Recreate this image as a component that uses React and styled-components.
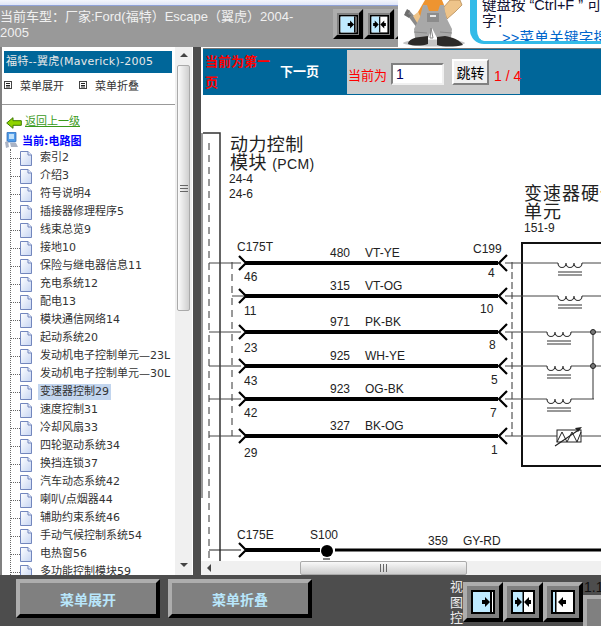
import React from 'react';
import styled, { createGlobalStyle } from 'styled-components';

const UI_FONT = '"DejaVu Sans", "Noto Sans CJK SC", sans-serif';
const ARIAL_FONT = '"Liberation Sans", "Noto Sans CJK SC", sans-serif';

const BLUE = '#006699';
const DARK = '#4d4d4d';
const GREY = '#999999';
const MID = '#808080';

const GlobalStyle = createGlobalStyle`
  html, body {
    margin: 0;
    padding: 0;
    background: ${DARK};
    overflow: hidden;
  }
`;

const Page = styled.div`
  width: 601px;
  height: 626px;
  display: grid;
  grid-template-rows: 47px 528px 51px;
  overflow: hidden;
  font-family: ${UI_FONT};
`;

/* ---- top ---- */

const Header = styled.header`
  display: flex;
  background: ${GREY};
  overflow: hidden;
`;

const HeaderLeft = styled.div`
  width: 398px;
  flex: none;
  overflow: hidden;
`;

const Strip = styled.div`
  height: 5px;
  background: linear-gradient(#f4f6fc, #dfe5f6);
  border-bottom: 1px solid #8fa2d8;
`;

const HeaderRow = styled.div`
  display: flex;
  padding-top: 3px;
`;

const CarTitle = styled.div`
  width: 333px;
  flex: none;
  padding-right: 12px;
  box-sizing: border-box;
  font: 13px/16px ${ARIAL_FONT};
  color: #f0f0f0;
`;

const HeaderButtons = styled.div`
  display: flex;
  gap: 1px;
`;

const ViewButton = styled.div`
  flex: none;
  box-sizing: border-box;
  width: ${(p) => p.$size}px;
  height: ${(p) => p.$size}px;
  display: flex;
  align-items: center;
  justify-content: center;
  background: ${MID};
  border-style: solid;
  border-width: 4px;
  border-color: #adadad #000 #000 #adadad;
`;

const Banner = styled.div`
  flex: 1;
  display: flex;
  background: #fff;
  overflow: hidden;
`;

const Speech = styled.div`
  flex: 1;
  height: 44px;
  margin-left: 2px;
  padding-left: 5px;
  box-sizing: border-box;
  border-left: 7px solid #33bbe8;
  border-bottom: 3px solid #33bbe8;
  border-bottom-left-radius: 14px;
  font: 14.5px/16px ${ARIAL_FONT};
  color: #101030;
  white-space: nowrap;
  overflow: hidden;
`;

const SpeechLine = styled.div`
  margin-top: ${(p) => p.$top || 0}px;
`;

const SearchLink = styled.a`
  display: block;
  margin-left: 20px;
  color: #0066cc;
  line-height: 14px;
  margin-top: 2px;
  letter-spacing: 0.3px;
`;

/* ---- middle ---- */

const Main = styled.main`
  display: grid;
  grid-template-columns: 193px 8px 400px;
  min-height: 0;
`;

const Side = styled.aside`
  display: flex;
  background: #fff;
  border-left: 2px solid ${MID};
  overflow: hidden;
`;

const SideBody = styled.div`
  width: 173px;
  flex: none;
  overflow: hidden;
`;

const CarBar = styled.div`
  height: 22px;
  margin: 4px 3px 0 2px;
  padding-left: 2px;
  background: ${BLUE};
  color: #e8e8e8;
  font-size: 11px;
  letter-spacing: 0.25px;
  line-height: 21px;
  white-space: nowrap;
`;

const MenuRow = styled.div`
  height: 32px;
  display: flex;
  align-items: center;
  padding-left: 2px;
  padding-bottom: 7px;
  box-sizing: border-box;
  border-bottom: 1px solid ${GREY};
  font-size: 11px;
  color: #333;
`;

const MenuToggle = styled.span`
  display: flex;
  align-items: center;
  gap: 8px;
  width: 75px;
`;

const BackRow = styled.div`
  height: 26px;
  box-sizing: border-box;
  padding: 10px 0 0 4px;
  display: flex;
  align-items: flex-start;
  gap: 3px;
`;

const BackLink = styled.a`
  color: #3a9a1a;
  font-size: 11px;
  line-height: 14px;
  text-decoration: underline;
`;

const RootRow = styled.div`
  height: 18px;
  display: flex;
  align-items: center;
  gap: 4px;
  padding-left: 3px;
  font-size: 11px;
  font-weight: bold;
  color: #0000ff;
`;

const Tree = styled.ul`
  list-style: none;
  margin: 0 0 0 8px;
  padding: 0;
  border-left: 1px dotted #666;
`;

const TreeItem = styled.li`
  height: 18px;
  display: flex;
  align-items: center;
`;

const Connector = styled.span`
  width: 9px;
  flex: none;
  border-top: 1px dotted #666;
`;

const TreeLabel = styled.span`
  margin-left: 6px;
  padding: 0 2px;
  line-height: 16px;
  font-size: 11px;
  color: #333;
  white-space: nowrap;
  background: ${(p) => (p.$selected ? '#c2d5ee' : 'transparent')};
`;

const ScrollY = styled.div`
  width: 17px;
  flex: none;
  display: flex;
  flex-direction: column;
  align-items: center;
  background: #f0f0f0;
  margin-right: 1px;
`;

const ScrollArrow = styled.div`
  flex: none;
  width: 16px;
  height: 18px;
  display: flex;
  align-items: center;
  justify-content: center;
  font-size: 0;
`;

const ScrollThumbY = styled.div`
  flex: none;
  width: 13px;
  height: 246px;
  box-sizing: border-box;
  display: flex;
  align-items: center;
  justify-content: center;
  border: 1px solid #aaa;
  border-radius: 2px;
  background: linear-gradient(90deg, #fbfbfb, #cfcfcf);
`;

const ScrollGap = styled.div`
  flex: 1;
`;

const Divider = styled.div`
  background: ${DARK};
`;

const Content = styled.section`
  display: flex;
  flex-direction: column;
  min-height: 0;
  background: #fff;
  padding-top: 1px;
`;

const NavBar = styled.nav`
  flex: none;
  height: 46px;
  margin-left: 2px;
  display: flex;
  background: ${BLUE};
  border-top: 1px solid #777;
`;

const PageNote = styled.div`
  width: 70px;
  flex: none;
  box-sizing: border-box;
  padding: 2px 3px 0 2px;
  color: #ff0000;
  font-size: 13px;
  font-weight: bold;
  line-height: 21px;
`;

const NextLink = styled.a`
  width: 74px;
  flex: none;
  box-sizing: border-box;
  padding: 15px 0 0 7px;
  color: #fff;
  font-size: 13px;
  font-weight: bold;
  line-height: 16px;
`;

const JumpForm = styled.form`
  width: 173px;
  flex: none;
  box-sizing: border-box;
  margin: 1px 0;
  padding: 0 0 9px 1px;
  display: flex;
  align-items: flex-end;
  background: #cccccc;
`;

const JumpLabel = styled.span`
  flex: none;
  white-space: nowrap;
  color: #ff0000;
  font: 13px/18px ${ARIAL_FONT};
`;

const JumpInput = styled.input`
  width: 53px;
  height: 22px;
  flex: none;
  margin: 0 8px 0 4px;
  padding: 0 0 0 3px;
  box-sizing: border-box;
  border: 2px solid;
  border-color: #808080 #f0f0f0 #f0f0f0 #808080;
  background: #fff;
  color: #000060;
  font: 14px ${ARIAL_FONT};
  outline: none;
`;

const JumpButton = styled.button`
  width: 37px;
  height: 26px;
  flex: none;
  padding: 0;
  box-sizing: border-box;
  border: 2px solid;
  border-color: #fff #808080 #808080 #fff;
  background: #f0f0f0;
  color: #000;
  font: 14px ${ARIAL_FONT};
`;

const PageCount = styled.span`
  margin-left: 5px;
  color: #ff0000;
  white-space: nowrap;
  font: 14px/18px ${ARIAL_FONT};
`;

const Drawing = styled.div`
  flex: 1;
  min-height: 0;
  overflow: hidden;
`;

const DiagramSvg = styled.svg`
  display: block;
  width: 400px;
  height: 466px;
  font-family: ${ARIAL_FONT};
  fill: #222;
`;

const ScrollX = styled.div`
  flex: none;
  height: 14px;
  display: flex;
  align-items: stretch;
  background: #f0f0f0;
`;

const ScrollLeft = styled.div`
  width: 18px;
  margin-right: 81px;
  display: flex;
  align-items: center;
  justify-content: center;
`;

const ScrollThumbX = styled.div`
  width: 167px;
  box-sizing: border-box;
  display: flex;
  align-items: center;
  justify-content: center;
  border: 1px solid #aaa;
  border-radius: 2px;
  background: linear-gradient(#f8f8f8, #cdcdcd);
`;

/* ---- bottom ---- */

const Footer = styled.footer`
  display: flex;
  background: ${DARK};
  padding: 4px 0 0 16px;
  overflow: hidden;
`;

const FooterButton = styled.button`
  width: 144px;
  height: 39px;
  padding: 0;
  margin-right: 8px;
  box-sizing: border-box;
  background: ${MID};
  border-style: solid;
  border-width: 4px;
  border-color: #adadad #000 #000 #adadad;
  color: #b8e6fb;
  font: bold 14px "Noto Sans CJK SC", sans-serif;
`;

const ViewGroup = styled.div`
  margin-left: auto;
  display: flex;
`;

const ViewLabel = styled.div`
  width: 13px;
  flex: none;
  font: 13px/15.5px ${ARIAL_FONT};
  color: #eee;
`;

const ViewButtons = styled.div`
  display: flex;
  padding-top: 3px;
`;

const ZoomColumn = styled.div`
  width: 18px;
  flex: none;
  overflow: hidden;
`;

const ZoomValue = styled.div`
  padding: 1px 0 0 1px;
  font: 14px/15px ${ARIAL_FONT};
  color: #111;
  white-space: nowrap;
`;

const ZoomBox = styled.div`
  height: 40px;
  background: ${MID};
  border-top: 4px solid #adadad;
  border-left: 4px solid #adadad;
`;

/* ---- data ---- */

const treeItems = [
  '索引2', '介绍3', '符号说明4', '插接器修理程序5', '线束总览9', '接地10',
  '保险与继电器信息11', '充电系统12', '配电13', '模块通信网络14', '起动系统20',
  '发动机电子控制单元—23L', '发动机电子控制单元—30L', '变速器控制29', '速度控制31',
  '冷却风扇33', '四轮驱动系统34', '换挡连锁37', '汽车动态系统42', '喇叭/点烟器44',
  '辅助约束系统46', '手动气候控制系统54', '电热窗56', '多功能控制模块59',
];

const wires = [
  { y: 263, no: '480', code: 'VT-YE', pin: '46', pinX: 244, pinY: 281, right: '4', rightX: 488, rightY: 277, stub: 209 },
  { y: 296, no: '315', code: 'VT-OG', pin: '11', pinX: 244, pinY: 315, right: '10', rightX: 480, rightY: 313, stub: 232 },
  { y: 332, no: '971', code: 'PK-BK', pin: '23', pinX: 244, pinY: 352, right: '8', rightX: 489, rightY: 349, stub: 209 },
  { y: 366, no: '925', code: 'WH-YE', pin: '43', pinX: 244, pinY: 385, right: '5', rightX: 491, rightY: 384, stub: 209 },
  { y: 399, no: '923', code: 'OG-BK', pin: '42', pinX: 244, pinY: 417, right: '7', rightX: 490, rightY: 417, stub: 209 },
  { y: 436, no: '327', code: 'BK-OG', pin: '29', pinX: 244, pinY: 457, right: '1', rightX: 491, rightY: 454, stub: 209 },
];

const coils = [
  { x: 558, y: 263 },
  { x: 558, y: 296 },
  { x: 547, y: 332 },
  { x: 547, y: 366 },
  { x: 547, y: 399 },
];

/* ---- drawings ---- */

function ViewIcon({ kind, size }) {
  return (
    <svg width={size} height={size} viewBox="0 0 24 24">
      <rect x="1" y="1" width="22" height="22" fill="#fff" stroke="#000" strokeWidth="2" />
      {kind === 'right' && (
        <>
          <rect x="2" y="2" width="17" height="20" fill="#bfeaff" />
          <rect x="19" y="2" width="2" height="20" fill="#000" />
          <path d="M11 10h3V7l5 5-5 5v-3h-3z" fill="#000" />
        </>
      )}
      {kind === 'both' && (
        <>
          <rect x="2" y="2" width="10" height="20" fill="#bfeaff" />
          <rect x="11.5" y="2" width="1.5" height="20" fill="#000" />
          <path d="M4 10h2V7l5 5-5 5v-3H4zM20 10h-2V7l-5 5 5 5v-3h2z" fill="#000" />
        </>
      )}
      {kind === 'left' && (
        <>
          <rect x="2" y="2" width="2" height="20" fill="#bfeaff" />
          <rect x="4" y="2" width="1.5" height="20" fill="#000" />
          <path d="M15 10h-3V7l-5 5 5 5v-3h3z" fill="#000" />
        </>
      )}
    </svg>
  );
}

function Mechanic() {
  return (
    <svg width="70" height="47" viewBox="398 0 70 47" style={{ flex: 'none' }}>
      <ellipse cx="434" cy="43" rx="31" ry="3.500" fill="#c4c4c4" />
      <path d="M405 12l4-2 12 14-4 4z" fill="#8a8a8a" />
      <path d="M404 15l3-6 3 2-2 3 3 1-2 3z" fill="#6e6e6e" />
      <path d="M418 12l7-12h17l4 10-4 8h-22z" fill="#ee9430" />
      <path d="M443 8l7-8h10l2 5-7 7-8 7z" fill="#eec48a" stroke="#a07038" strokeWidth=".6" />
      <path d="M418 12l7 13-6 1-6-10z" fill="#eec48a" />
      <path d="M423 5h4l2 6h9l2-6h4l2 12 6 12-1 9h-14l-5-10-4 10h-13l-1-9 6-12z" fill="#a8a8a8" />
      <path d="M427 13h12v9h-12z" fill="#8c8c8c" />
      <rect x="430" y="15" width="6" height="2" fill="#e8e8e8" />
      <path d="M431 28l2 10h-3zM414 32l13 1M440 32l12 1" stroke="#888" fill="none" />
      <path d="M408 44c0-4 7-7 12-7l8-1v8c-6 2-15 2-20 0z" fill="#2c2a28" />
      <path d="M437 37l8-1c7 1 15 4 18 9-8 2-20 2-26 0z" fill="#2c2a28" />
    </svg>
  );
}

function PageIcon() {
  return (
    <svg width="12" height="15" viewBox="0 0 12 15" style={{ flex: 'none' }}>
      <defs>
        <linearGradient id="pageFill" x1="0" y1="0" x2="1" y2="1">
          <stop offset="0" stopColor="#ffffff" />
          <stop offset="1" stopColor="#c5d4f2" />
        </linearGradient>
      </defs>
      <path d="M.5.5h7.5l3.5 3.5v10.500h-11z" fill="url(#pageFill)" stroke="#7286bd" />
      <path d="M8 .5v3.500h3.500" fill="#e8eefb" stroke="#7286bd" />
    </svg>
  );
}

function MenuIcon() {
  return (
    <svg width="8" height="8" viewBox="0 0 8 8" style={{ flex: 'none' }}>
      <rect x=".5" y=".5" width="7" height="7" fill="#fff" stroke="#444" />
      <path d="M2 2.500h4M2 4.500h4M2 6h4" stroke="#222" />
    </svg>
  );
}

function BackArrow() {
  return (
    <svg width="16" height="12" viewBox="0 0 16 12" style={{ flex: 'none', marginTop: 2 }}>
      <path d="M.7 6L7 .7v3h8.300v4.600H7v3z" fill="#8fd400" stroke="#3c7a00" />
    </svg>
  );
}

function ComputerIcon() {
  return (
    <svg width="13" height="16" viewBox="0 0 13 16" style={{ flex: 'none' }}>
      <rect x="2" y="0" width="9" height="10" rx="1" fill="#4f9be8" stroke="#2c5fa8" strokeWidth=".7" />
      <rect x="4" y="2" width="5" height="5" fill="#bfe0fb" />
      <path d="M0 10l3-1 1 6-3 1zM5 11h6l2 4H6z" fill="#aab3c4" />
    </svg>
  );
}

function Triangle({ dir }) {
  const shapes = {
    up: 'M0 5L4 1l4 4z',
    down: 'M0 1l4 4 4-4z',
    left: 'M5 0L1 4l4 4z',
  };
  return (
    <svg width="8" height="8" viewBox="0 0 8 8">
      <path d={shapes[dir]} fill="#444" />
    </svg>
  );
}

function Grip({ vertical }) {
  return vertical ? (
    <svg width="8" height="7" viewBox="0 0 8 7">
      <path d="M0 .5h8M0 3.500h8M0 6.500h8" stroke="#666" />
    </svg>
  ) : (
    <svg width="7" height="8" viewBox="0 0 7 8">
      <path d="M.5 0v8M3.500 0v8M6.500 0v8" stroke="#666" />
    </svg>
  );
}

function Coil({ x, y }) {
  return (
    <g fill="none" stroke="#333">
      <path d={`M${x} ${y}a4 4.500 0 0 0 8 0a4 4.500 0 0 0 8 0a4 4.500 0 0 0 8 0`} strokeWidth="1.2" />
      <path d={`M${x} ${y + 9}h24M${x} ${y + 12}h24`} strokeWidth="1.200" />
    </g>
  );
}

function Diagram() {
  return (
    <DiagramSvg viewBox="201 95 400 466">
      <path d="M202 133v365" stroke={GREY} strokeWidth="2" />
      <g fill="none" stroke="#333">
        <path d="M203 133h17v430" strokeWidth="1.500" />
        <path d="M209 143v420" strokeDasharray="7 5" />
        <path d="M232 262v174" strokeDasharray="7 5" />
        <path d="M512 262v174" strokeDasharray="7 3" />
      </g>
      <path d="M601 243H522v223h79" fill="none" stroke="#111" strokeWidth="2" />

      <text x="230" y="151" fontSize="18" letterSpacing="0.4">动力控制</text>
      <text x="230" y="169" fontSize="18" letterSpacing="0.4">模块 <tspan fontSize="14">(PCM)</tspan></text>
      <text x="229" y="183" fontSize="12">24-4</text>
      <text x="229" y="198" fontSize="12">24-6</text>
      <text x="524" y="200" fontSize="18" letterSpacing="1">变速器硬件</text>
      <text x="524" y="218" fontSize="18" letterSpacing="1">单元</text>
      <text x="524" y="232" fontSize="12">151-9</text>

      <text x="237" y="251" fontSize="12">C175T</text>
      <text x="473" y="253" fontSize="12">C199</text>

      {wires.map((w) => (
        <g key={w.no}>
          <path d={`M${w.stub} ${w.y}h32M505 ${w.y}h96`} fill="none" stroke="#444" />
          <path d={`M245 ${w.y}H498`} stroke="#000" strokeWidth="4" />
          <path d={`M239 ${w.y - 7}l7 7-7 7M507 ${w.y - 8}l-8 8 8 8`} fill="none" stroke="#000" strokeWidth="2.2" />
          <text x="330" y={w.y - 6} fontSize="12">{w.no}</text>
          <text x="365" y={w.y - 6} fontSize="12">{w.code}</text>
          <text x={w.pinX} y={w.pinY} fontSize="12">{w.pin}</text>
          <text x={w.rightX} y={w.rightY} fontSize="12">{w.right}</text>
        </g>
      ))}

      {coils.map((c) => (
        <g key={`${c.x}-${c.y}`}>
          <path d={`M${c.x} ${c.y}h24`} stroke="#fff" strokeWidth="3" />
          <Coil x={c.x} y={c.y} />
        </g>
      ))}

      <path d="M593 332v67" stroke="#333" />
      <path d="M594 399h7" stroke="#fff" strokeWidth="2" />
      <circle cx="593" cy="332" r="2.500" fill="#777" stroke="#222" />
      <circle cx="593" cy="366" r="2.500" fill="#777" stroke="#222" />

      <rect x="557" y="430" width="24" height="12" fill="#fff" stroke="#222" />
      <path d="M557 442l5-10 5 10 5-10 5 10 4-10" fill="none" stroke="#222" />
      <path d="M555 446l25-17" stroke="#222" strokeWidth="1.200" />
      <path d="M582 427l-7 1 3 4z" fill="#222" />

      <text x="237" y="539" fontSize="12">C175E</text>
      <text x="310" y="539" fontSize="12">S100</text>
      <text x="428" y="545" fontSize="12">359</text>
      <text x="463" y="545" fontSize="12">GY-RD</text>
      <path d="M209 550h32" stroke="#222" />
      <path d="M239 543l7 7-7 7" fill="none" stroke="#000" strokeWidth="2.2" />
      <path d="M245 550h75" stroke="#000" strokeWidth="4" />
      <circle cx="327" cy="551" r="6" fill="#000" />
      <path d="M323 559h7" stroke="#000" />
      <path d="M335 550h266" stroke="#000" strokeWidth="3" />
    </DiagramSvg>
  );
}

export default function App() {
  return (
    <Page>
      <GlobalStyle />
      <Header>
        <HeaderLeft>
          <Strip />
          <HeaderRow>
            <CarTitle>当前车型：厂家:Ford(福特）Escape（翼虎）2004-2005</CarTitle>
            <HeaderButtons>
              <ViewButton $size={30}><ViewIcon kind="right" size={19} /></ViewButton>
              <ViewButton $size={30}><ViewIcon kind="both" size={19} /></ViewButton>
              <ViewButton $size={30}><ViewIcon kind="left" size={19} /></ViewButton>
            </HeaderButtons>
          </HeaderRow>
        </HeaderLeft>
        <Banner>
          <Mechanic />
          <Speech>
            <SpeechLine $top={-3}>键盘按 “Ctrl+F ” 可按</SpeechLine>
            <SpeechLine>字！</SpeechLine>
            <SearchLink>&gt;&gt;菜单关键字搜索</SearchLink>
          </Speech>
        </Banner>
      </Header>

      <Main>
        <Side>
          <SideBody>
            <CarBar>福特--翼虎(Maverick)-2005</CarBar>
            <MenuRow>
              <MenuToggle><MenuIcon />菜单展开</MenuToggle>
              <MenuToggle><MenuIcon />菜单折叠</MenuToggle>
            </MenuRow>
            <BackRow>
              <BackArrow />
              <BackLink>返回上一级</BackLink>
            </BackRow>
            <RootRow><ComputerIcon />当前:电路图</RootRow>
            <Tree>
              {treeItems.map((name) => (
                <TreeItem key={name}>
                  <Connector />
                  <PageIcon />
                  <TreeLabel $selected={name === '变速器控制29'}>{name}</TreeLabel>
                </TreeItem>
              ))}
            </Tree>
          </SideBody>
          <ScrollY>
            <ScrollArrow><Triangle dir="up" /></ScrollArrow>
            <ScrollThumbY><Grip vertical /></ScrollThumbY>
            <ScrollGap />
            <ScrollArrow><Triangle dir="down" /></ScrollArrow>
          </ScrollY>
        </Side>

        <Divider />

        <Content>
          <NavBar>
            <PageNote>当前为第一页</PageNote>
            <NextLink>下一页</NextLink>
            <JumpForm onSubmit={(e) => e.preventDefault()}>
              <JumpLabel>当前为</JumpLabel>
              <JumpInput defaultValue="1" />
              <JumpButton type="button">跳转</JumpButton>
              <PageCount>1 / 4</PageCount>
            </JumpForm>
          </NavBar>
          <Drawing>
            <Diagram />
          </Drawing>
          <ScrollX>
            <ScrollLeft><Triangle dir="left" /></ScrollLeft>
            <ScrollThumbX><Grip /></ScrollThumbX>
          </ScrollX>
        </Content>
      </Main>

      <Footer>
        <FooterButton>菜单展开</FooterButton>
        <FooterButton>菜单折叠</FooterButton>
        <ViewGroup>
          <ViewLabel>视图控制</ViewLabel>
          <ViewButtons>
            <ViewButton $size={40}><ViewIcon kind="right" size={24} /></ViewButton>
            <ViewButton $size={40}><ViewIcon kind="both" size={24} /></ViewButton>
            <ViewButton $size={40}><ViewIcon kind="left" size={24} /></ViewButton>
          </ViewButtons>
          <ZoomColumn>
            <ZoomValue>1.1</ZoomValue>
            <ZoomBox />
          </ZoomColumn>
        </ViewGroup>
      </Footer>
    </Page>
  );
}
